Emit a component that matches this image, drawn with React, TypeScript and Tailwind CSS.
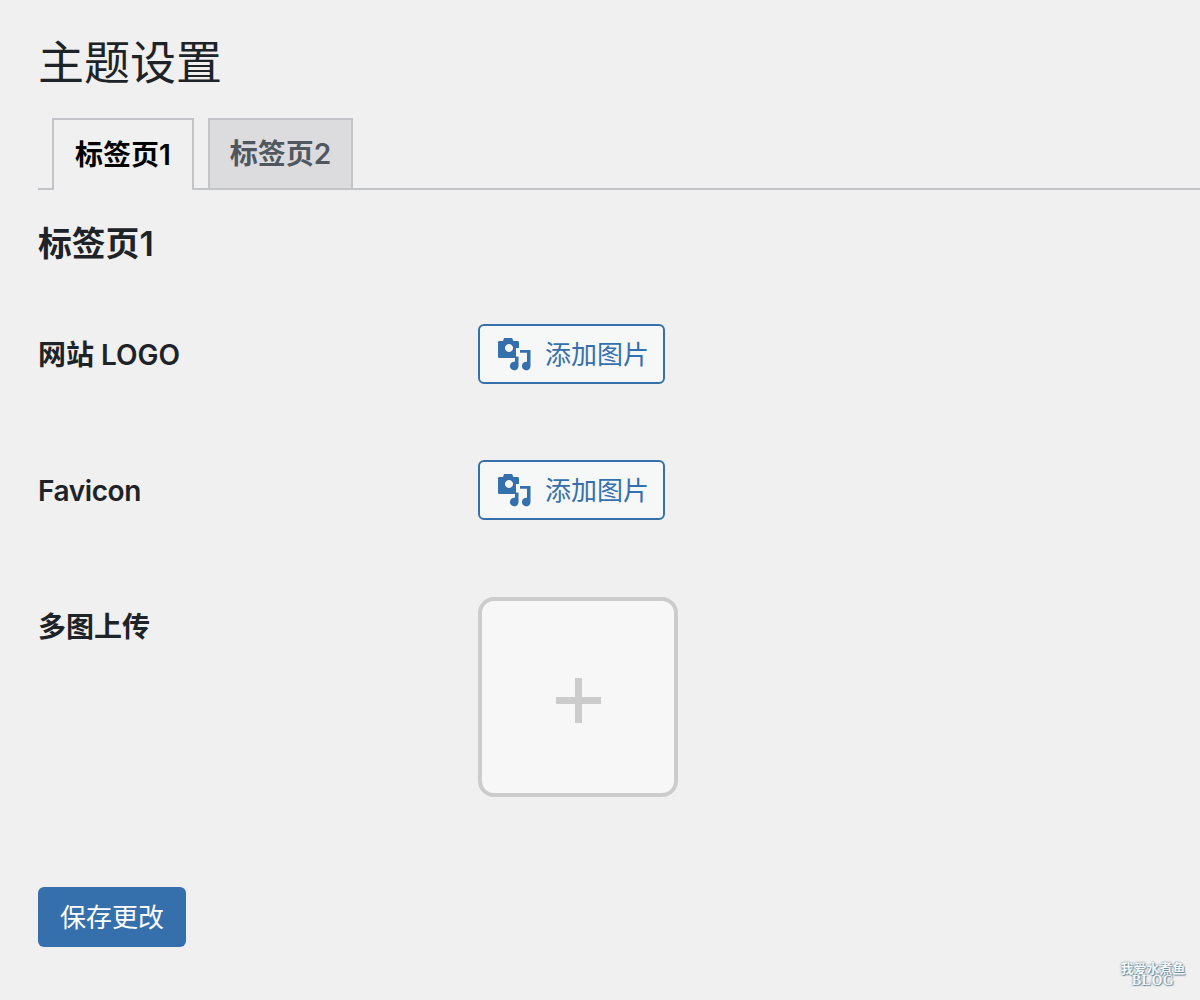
const sans = "font-['Inter','Noto_Sans_CJK_SC',sans-serif]";

function MediaIcon() {
  return (
    <svg width="36" height="36" viewBox="0 0 36 36" className="shrink-0 fill-[#3570ad]">
      <path
        fillRule="evenodd"
        d="M3.500 5H7l1-3h8l1.500 3h4c1 0 1.500.6 1.500 1.500V12h-3v10H3.500C2.600 22 2 21.400 2 20.500v-14C2 5.600 2.600 5 3.500 5zM13 8a4 4 0 1 0 .01 0z"
      />
      <path d="M24 14h10.500v16a4.300 4.300 0 1 1-3.500-4.200V16.800h-7z" />
      <path d="M19 20.500h3.500V30a4.300 4.300 0 1 1-3.500-4.200z" />
    </svg>
  );
}

function AddImageButton() {
  return (
    <button
      type="button"
      className="flex h-[60px] w-[187px] items-center gap-[13px] rounded-[6px] border-2 border-[#3570ad] bg-[#f6f7f7] pl-[16px] text-[26px] text-[#3570ad]"
    >
      <MediaIcon />
      <span className="pt-[1px]">添加图片</span>
    </button>
  );
}

export default function App() {
  return (
    <div className={`relative h-[1000px] overflow-hidden bg-[#f0f0f0] pl-[38px] text-[#1d2327] ${sans}`}>
      <h1 className="pt-[32px] text-[46px] leading-[60px] font-normal">主题设置</h1>

      <div className="mt-[26px] flex h-[72px] gap-[14px] border-b-2 border-[#c3c4c7] pl-[14px]">
        <div className="flex h-[72px] w-[142px] items-center justify-center border-2 border-b-0 border-[#c3c4c7] bg-[#f0f0f0] text-[28px] font-semibold text-black">
          标签页1
        </div>
        <div className="flex h-[70px] w-[145px] items-center justify-center border-2 border-b-0 border-[#c3c4c7] bg-[#dcdcde] text-[28px] font-semibold text-[#50575e]">
          标签页2
        </div>
      </div>

      <h2 className="mt-[32px] text-[33.800px] leading-[44px] font-semibold">标签页1</h2>

      <div className="mt-[58px] flex h-[60px] items-center">
        <div className="w-[440px] pt-[1px] text-[28px] leading-[36px] font-semibold">网站 LOGO</div>
        <AddImageButton />
      </div>

      <div className="mt-[76px] flex h-[60px] items-center">
        <div className="w-[440px] pt-[1px] text-[28px] leading-[36px] font-semibold tracking-[-0.4px]">Favicon</div>
        <AddImageButton />
      </div>

      <div className="mt-[77px] flex">
        <div className="w-[440px] pt-[12px] text-[28px] leading-[36px] font-semibold">多图上传</div>
        <div className="flex size-[200px] items-center justify-center rounded-[16px] border-4 border-[#cccccc] bg-[#f7f7f7] pt-[6px]">
          <svg width="45" height="45" viewBox="0 0 45 45" className="fill-[#cccccc]">
            <path d="M19 0h7v19h19v7H26v19h-7V26H0v-7h19z" />
          </svg>
        </div>
      </div>

      <button
        type="button"
        className="mt-[90px] flex h-[60px] w-[148px] items-center justify-center rounded-[6px] bg-[#3570ad] pt-[1px] text-[26px] text-white"
      >
        保存更改
      </button>

      <div className="absolute right-[14px] bottom-[14px] flex w-[66px] flex-col items-center gap-[3px] text-[#f4f8fa] [text-shadow:0_0_2px_#4f6f80,1px_1px_1px_#7f99a8]">
        <span className="font-['Noto_Sans_CJK_SC',sans-serif] text-[13px] leading-[10px] font-bold">我爱水煮鱼</span>
        <span className="font-['Liberation_Serif',serif] text-[14px] leading-[10px] font-bold tracking-[0.5px]">BLOG</span>
      </div>
    </div>
  );
}
